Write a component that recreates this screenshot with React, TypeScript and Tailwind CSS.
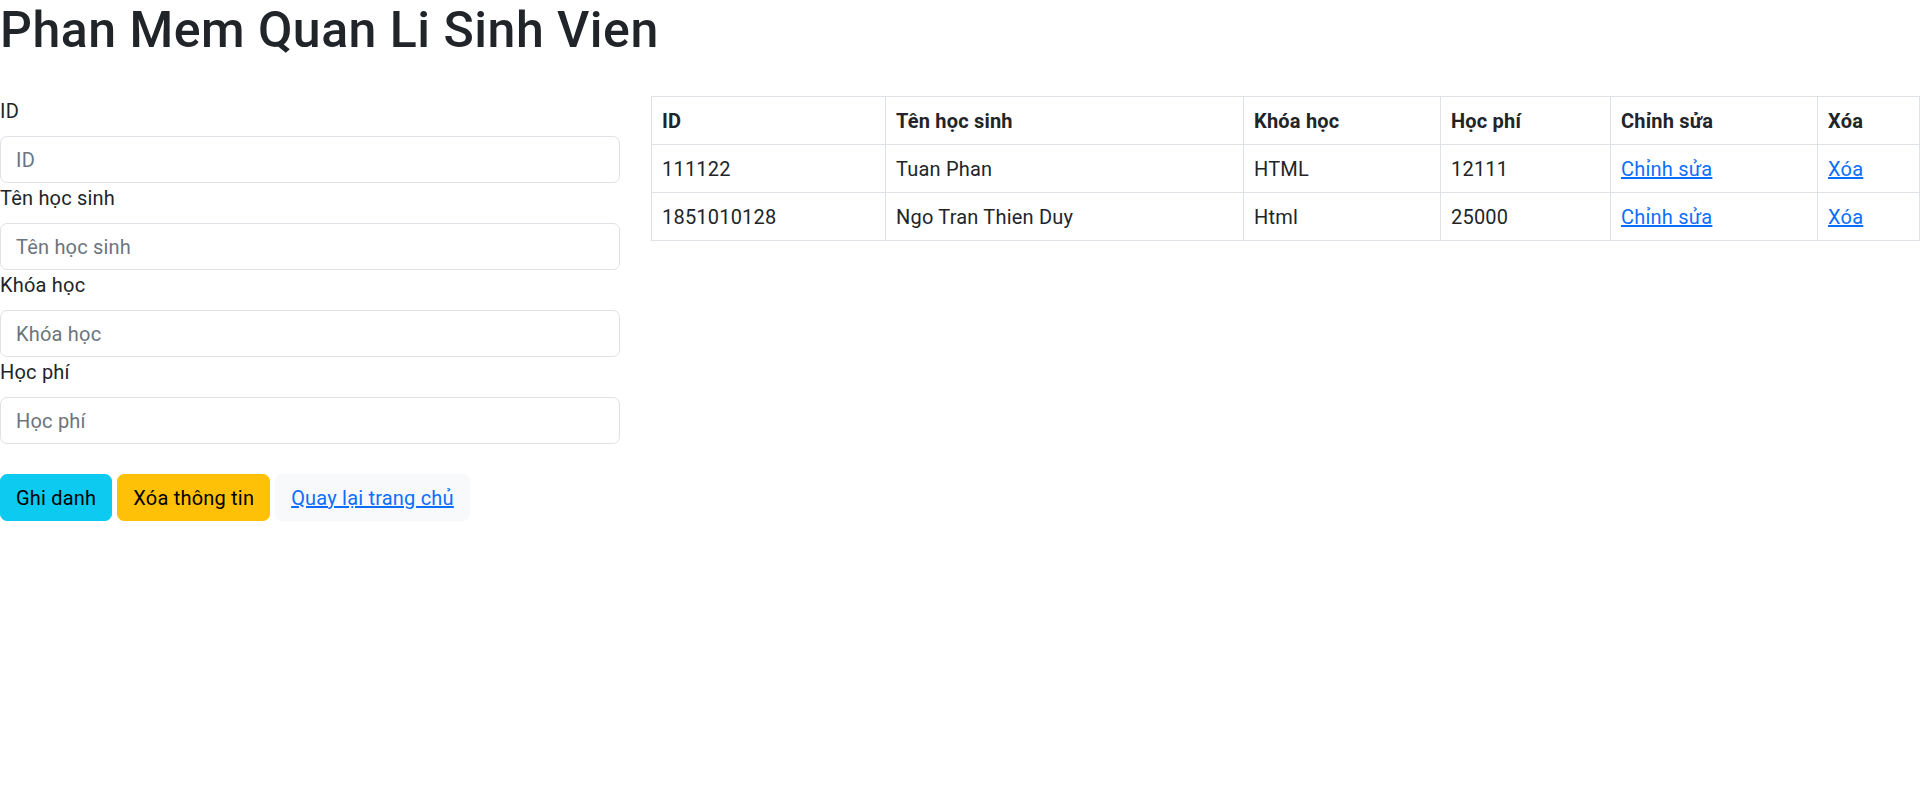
import React from 'react';

const students = [
  { id: '111122', name: 'Tuan Phan', course: 'HTML', fee: '12111' },
  { id: '1851010128', name: 'Ngo Tran Thien Duy', course: 'Html', fee: '25000' },
];

const fields = ['ID', 'Tên học sinh', 'Khóa học', 'Học phí'];

export default function App() {
  return (
    <div className="min-h-screen bg-white text-[#212529] font-['Segoe_UI',Roboto,sans-serif] text-[20px] leading-[30px] tracking-[0.2px]">
      <h1 className="text-[50px] leading-[60px] font-medium tracking-[0.5px]">Phan Mem Quan Li Sinh Vien</h1>

      <div className="flex gap-[31px] mt-[36px]">
        <div className="w-[620px] shrink-0">
          {fields.map(f => (
            <div key={f}>
              <label className="block mb-[10px]">{f}</label>
              <input
                placeholder={f}
                className="block w-full h-[47px] px-[15px] border border-[#dee2e6] rounded-[7px] text-[20px] tracking-[0.2px] placeholder:text-[#6c757d] outline-none"
              />
            </div>
          ))}

          <div className="flex gap-[5px] mt-[30px]">
            <button className="h-[47px] px-[15px] rounded-[7px] bg-[#0dcaf0] border border-[#0dcaf0] text-black tracking-[0.2px]">
              Ghi danh
            </button>
            <button className="h-[47px] px-[15px] rounded-[7px] bg-[#ffc107] border border-[#ffc107] text-black tracking-[0.2px]">
              Xóa thông tin
            </button>
            <button className="h-[47px] px-[15px] rounded-[7px] bg-[#f8f9fa] border border-[#f8f9fa] tracking-[0.2px]">
              <a href="#" className="text-[#0d6efd] underline">Quay lại trang chủ</a>
            </button>
          </div>
        </div>

        <div className="flex-1">
          <table className="w-full table-fixed border-collapse border border-[#dee2e6]">
            <colgroup>
              <col className="w-[234px]" />
              <col className="w-[358px]" />
              <col className="w-[197px]" />
              <col className="w-[170px]" />
              <col className="w-[207px]" />
              <col />
            </colgroup>
            <thead>
              <tr className="h-[48px]">
                {['ID', 'Tên học sinh', 'Khóa học', 'Học phí', 'Chỉnh sửa', 'Xóa'].map(h => (
                  <th key={h} className="border border-[#dee2e6] px-[10px] text-left font-bold">{h}</th>
                ))}
              </tr>
            </thead>
            <tbody>
              {students.map(s => (
                <tr key={s.id} className="h-[48px]">
                  <td className="border border-[#dee2e6] px-[10px]">{s.id}</td>
                  <td className="border border-[#dee2e6] px-[10px]">{s.name}</td>
                  <td className="border border-[#dee2e6] px-[10px]">{s.course}</td>
                  <td className="border border-[#dee2e6] px-[10px]">{s.fee}</td>
                  <td className="border border-[#dee2e6] px-[10px]">
                    <a href="#" className="text-[#0d6efd] underline">Chỉnh sửa</a>
                  </td>
                  <td className="border border-[#dee2e6] px-[10px]">
                    <a href="#" className="text-[#0d6efd] underline">Xóa</a>
                  </td>
                </tr>
              ))}
            </tbody>
          </table>
        </div>
      </div>
    </div>
  );
}
